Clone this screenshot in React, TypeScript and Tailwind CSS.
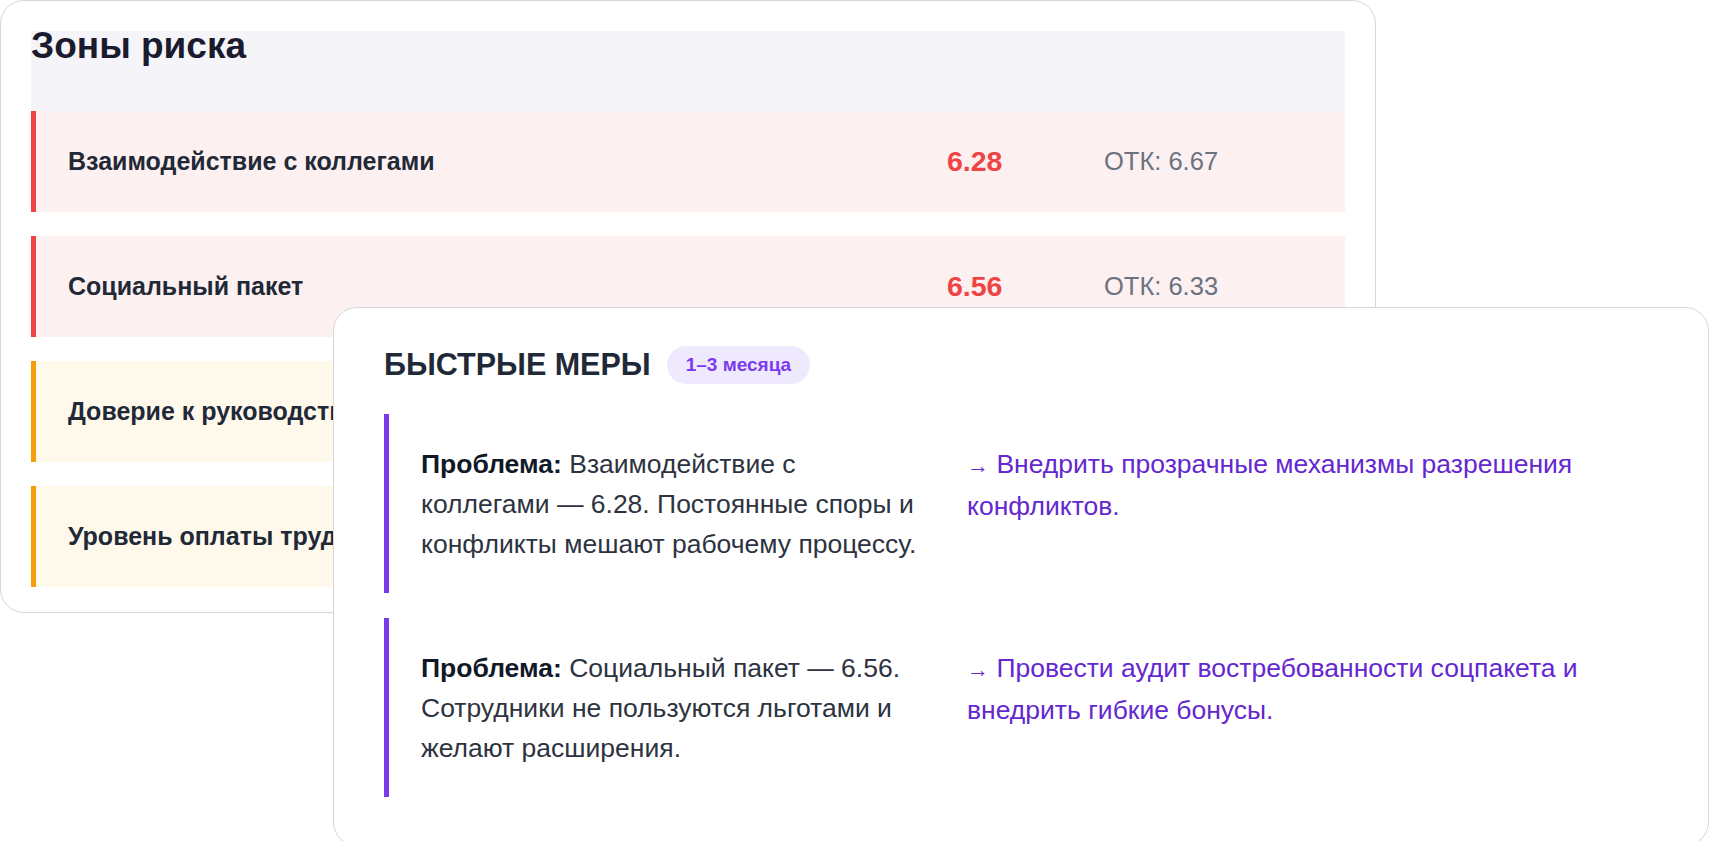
import React from "react";

const risks = [
  { title: "Взаимодействие с коллегами", score: "6.28", otk: "6.67", level: "high" },
  { title: "Социальный пакет", score: "6.56", otk: "6.33", level: "high" },
  { title: "Доверие к руководству", score: "6.89", otk: "7.12", level: "mid" },
  { title: "Уровень оплаты труда", score: "7.02", otk: "7.25", level: "mid" },
];

const measures = [
  {
    problem: "Взаимодействие с коллегами — 6.28. Постоянные споры и конфликты мешают рабочему процессу.",
    action: "Внедрить прозрачные механизмы разрешения конфликтов.",
  },
  {
    problem: "Социальный пакет — 6.56. Сотрудники не пользуются льготами и желают расширения.",
    action: "Провести аудит востребованности соцпакета и внедрить гибкие бонусы.",
  },
];

const RiskRow = ({ item }: { item: (typeof risks)[number] }) => {
  const high = item.level === "high";
  return (
    <div
      className={
        high
          ? "flex h-[101px] items-center border-l-[5px] border-[#ef4444] bg-[#fdf0f0] pl-[32px] pr-[30px]"
          : "flex h-[101px] items-center border-l-[5px] border-[#f59e0b] bg-[#fff9ec] pl-[32px] pr-[30px]"
      }
    >
      <p className="flex-1 text-[25px] font-bold text-[#1f2937]">{item.title}</p>
      <p className={high ? "w-[157px] text-[28.5px] font-bold text-[#ef4444]" : "w-[157px] text-[28.5px] font-bold text-[#f59e0b]"}>
        {item.score}
      </p>
      <p className="w-[211px] text-[25.5px] text-[#6b7280]">ОТК: {item.otk}</p>
    </div>
  );
};

export default function App() {
  return (
    <div className="relative h-[841px] w-[1710px] overflow-hidden bg-white font-['Liberation_Sans',Arial,sans-serif]">
      <div className="w-[1376px] rounded-[24px] border border-[#d4d7dd] bg-white px-[30px] pt-[30px] pb-[25px]">
        <div className="h-[80px] bg-[#f5f5f9]">
          <h2 className="text-[37px] leading-[30px] font-bold text-[#1a1b2e]">Зоны риска</h2>
        </div>
        <div className="flex flex-col gap-[24px]">
          {risks.map((r) => (
            <RiskRow key={r.title} item={r} />
          ))}
        </div>
      </div>

      <div className="absolute top-[307px] left-[333px] w-[1376px] rounded-[24px] border border-[#d4d7dd] bg-white px-[50px] pt-[34px] pb-[48px]">
        <div className="flex items-center gap-[16px]">
          <h3 className="text-[30.5px] font-bold text-[#1f2937]">БЫСТРЫЕ МЕРЫ</h3>
          <span className="flex h-[38px] items-center rounded-full bg-[#efe9fe] px-[19px] text-[19px] font-bold text-[#7c3aed]">
            1–3 месяца
          </span>
        </div>
        <div className="mt-[26px] flex flex-col gap-[25px]">
          {measures.map((m) => (
            <div key={m.action} className="flex border-l-[5px] border-[#7c3aed] pt-[30px] pb-[29px] pl-[32px] text-[26.5px] leading-[40px]">
              <p className="w-[500px] text-[#2d3340]">
                <b className="text-[#111827]">Проблема:</b> {m.problem}
              </p>
              <p className="ml-[46px] w-[650px] text-[#6427d0]">
                <span className="text-[22px]">→</span> {m.action}
              </p>
            </div>
          ))}
        </div>
      </div>
    </div>
  );
}
